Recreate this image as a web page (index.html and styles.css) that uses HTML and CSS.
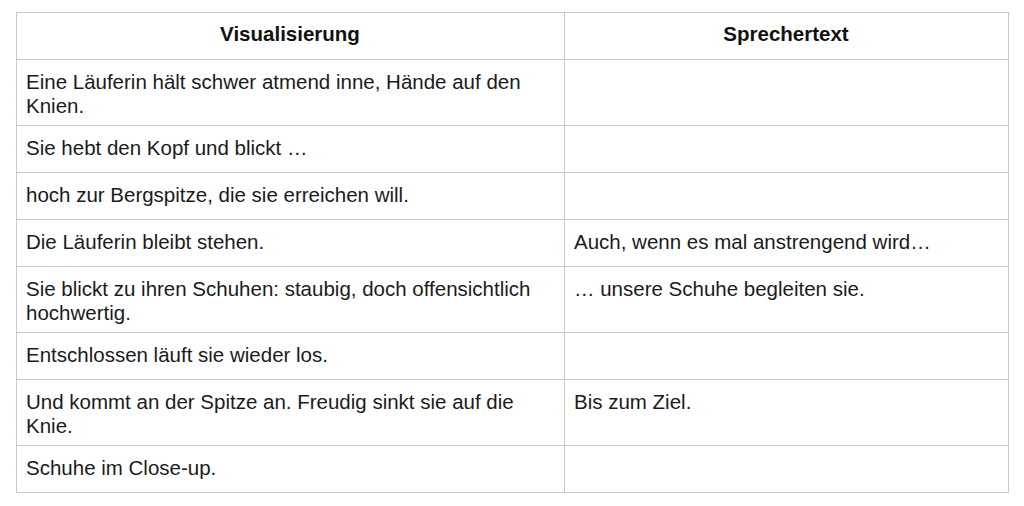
FILE: index.html
```html
<!DOCTYPE html>
<html lang="de">
<head>
<meta charset="utf-8">
<title>Storyboard</title>
<link rel="stylesheet" href="styles.css">
</head>
<body>
<table class="board">
  <colgroup>
    <col class="col-vis">
    <col class="col-text">
  </colgroup>
  <thead>
    <tr>
      <th>Visualisierung</th>
      <th>Sprechertext</th>
    </tr>
  </thead>
  <tbody>
    <tr><td>Eine Läuferin hält schwer atmend inne, Hände auf den Knien.</td><td></td></tr>
    <tr><td>Sie hebt den Kopf und blickt …</td><td></td></tr>
    <tr><td>hoch zur Bergspitze, die sie erreichen will.</td><td></td></tr>
    <tr><td>Die Läuferin bleibt stehen.</td><td>Auch, wenn es mal anstrengend wird…</td></tr>
    <tr><td>Sie blickt zu ihren Schuhen: staubig, doch offensichtlich hochwertig.</td><td>… unsere Schuhe begleiten sie.</td></tr>
    <tr><td>Entschlossen läuft sie wieder los.</td><td></td></tr>
    <tr><td>Und kommt an der Spitze an. Freudig sinkt sie auf die Knie.</td><td>Bis zum Ziel.</td></tr>
    <tr><td>Schuhe im Close-up.</td><td></td></tr>
  </tbody>
</table>
</body>
</html>
```
FILE: styles.css
```css
html, body {
  margin: 0;
  padding: 0;
  background: #ffffff;
}

body {
  padding: 12px 0 0 16px;
  font-family: "Liberation Sans", Arial, Helvetica, sans-serif;
  font-size: 20.5px;
  line-height: 24px;
  color: #1b1b1b;
}

.board {
  border-collapse: collapse;
  table-layout: fixed;
  width: 993px;
}

.col-vis {
  width: 548px;
}

.board th,
.board td {
  border: 1px solid #c8c8c8;
  vertical-align: top;
  text-align: left;
  height: 29px;
  padding: 10px 10px 7px 9px;
}

.board th {
  font-weight: bold;
  text-align: center;
  color: #111111;
  height: 24px;
  padding-top: 9px;
  padding-bottom: 13px;
}
```
